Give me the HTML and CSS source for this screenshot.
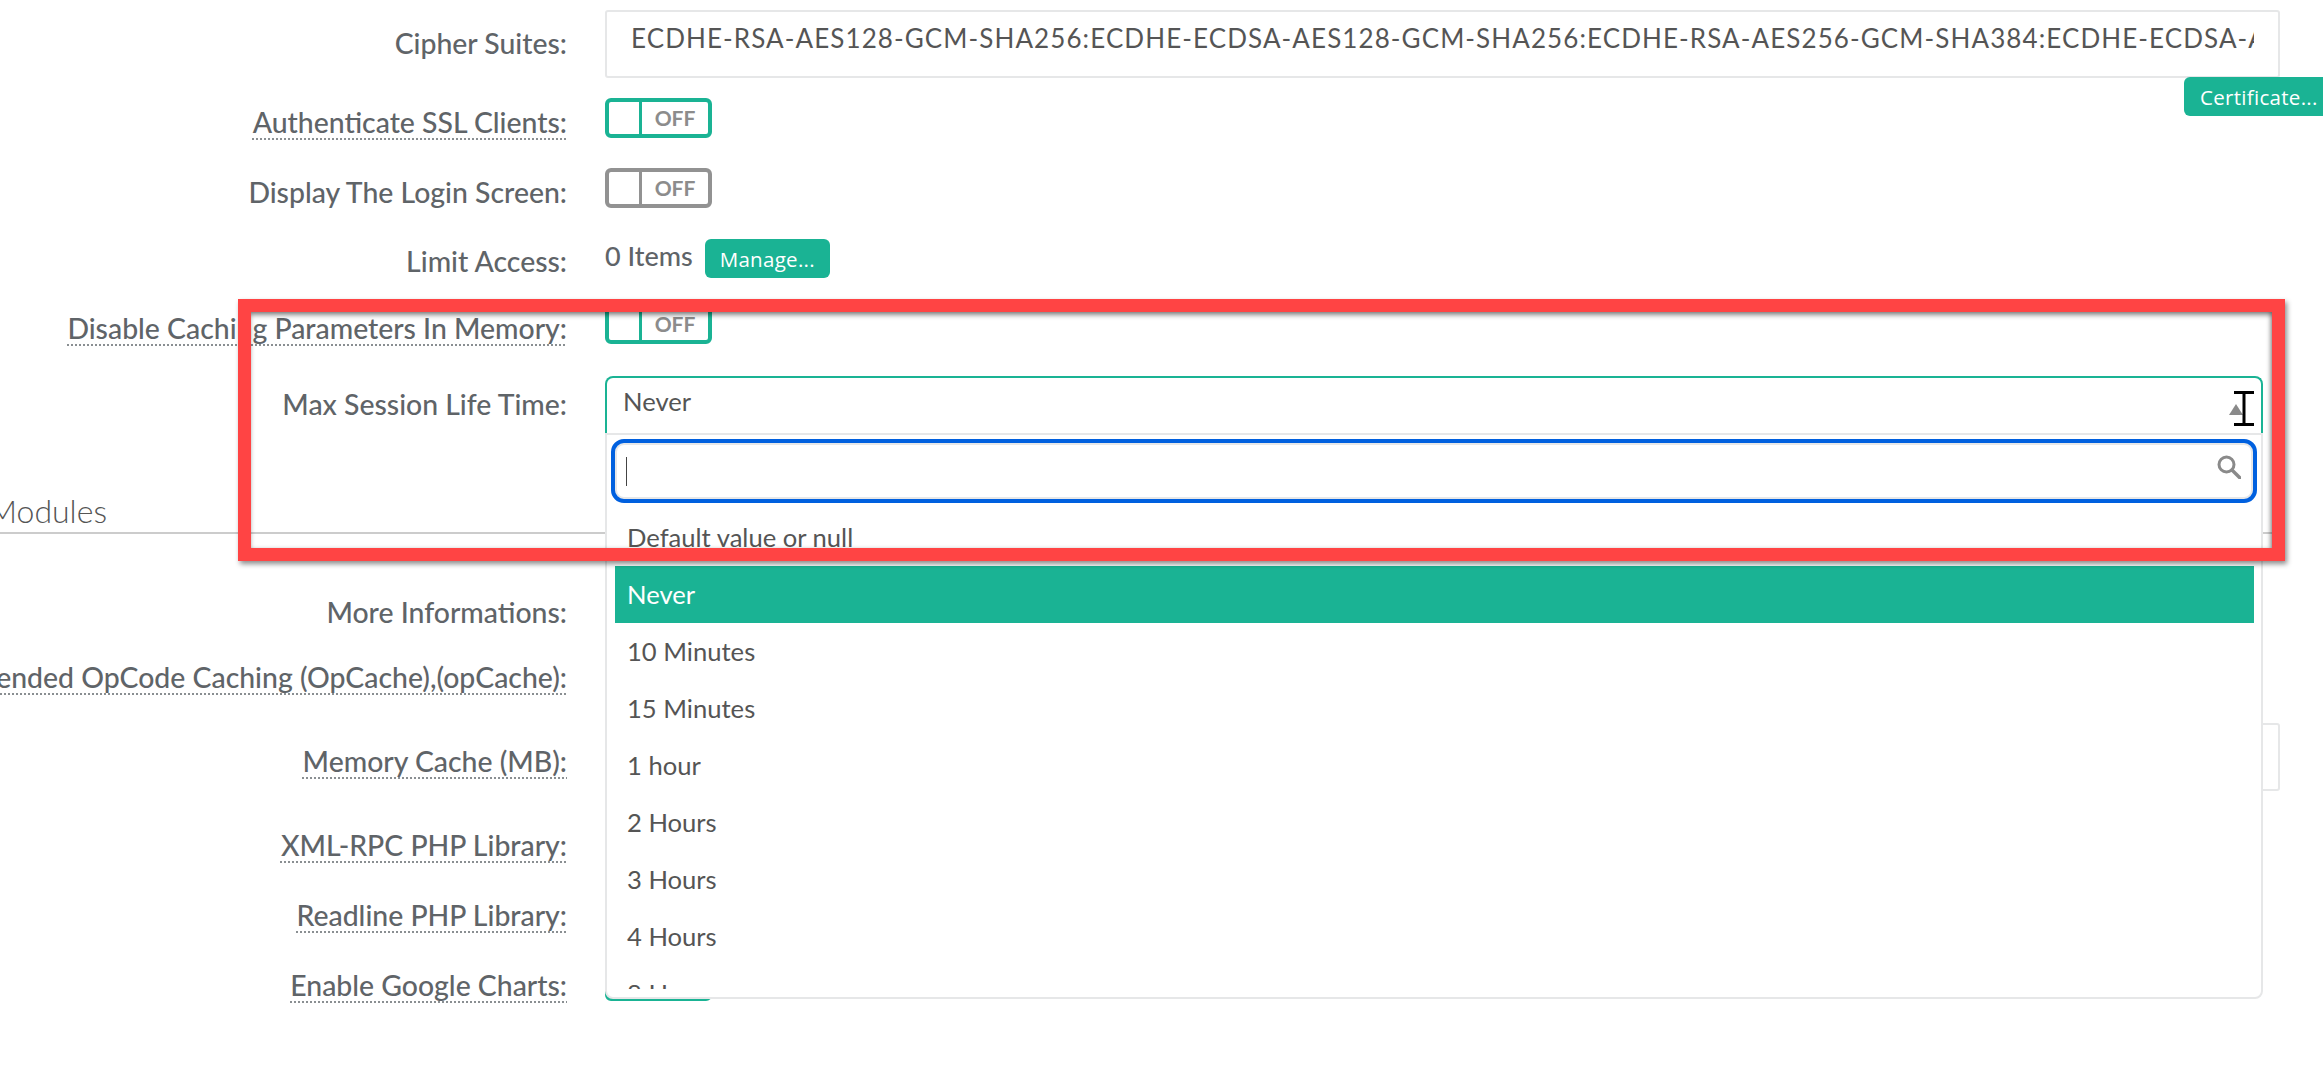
FILE: index.html
```html
<!DOCTYPE html>
<html lang="en">
<head>
  <meta charset="UTF-8" />
  <title>PHP settings</title>
  <link rel="stylesheet" href="styles.css">
</head>
<body>
  <form class="settings">
    <label class="field-label label-input">Cipher Suites:</label>
    <div class="cipher-field">
      <input class="text-input" type="text" value="ECDHE-RSA-AES128-GCM-SHA256:ECDHE-ECDSA-AES128-GCM-SHA256:ECDHE-RSA-AES256-GCM-SHA384:ECDHE-ECDSA-AES256-GCM-SHA384:ECDHE-RSA-CHACHA20-POLY1305">
      <button class="btn btn-certificate" type="button">Certificate...</button>
    </div>

    <label class="field-label"><span class="hint">Authenticate SSL Clients:</span></label>
    <div class="toggle"><span class="toggle-knob"></span><span class="toggle-text">OFF</span></div>

    <label class="field-label">Display The Login Screen:</label>
    <div class="toggle toggle-muted"><span class="toggle-knob"></span><span class="toggle-text">OFF</span></div>

    <label class="field-label label-limit">Limit Access:</label>
    <div class="items-field">
      <span class="items-count">0 Items</span>
      <button class="btn btn-manage" type="button">Manage...</button>
    </div>

    <label class="field-label"><span class="hint">Disable Caching Parameters In Memory:</span></label>
    <div class="toggle"><span class="toggle-knob"></span><span class="toggle-text">OFF</span></div>

    <label class="field-label label-select">Max Session Life Time:</label>
    <div class="select">
      <span class="select-value">Never</span>
      <span class="select-arrow"></span>
      <div class="dropdown">
        <div class="dropdown-search">
          <span class="search-caret"></span>
          <svg class="search-icon" viewBox="0 0 24 24" width="24" height="24">
            <circle cx="9.5" cy="9.5" r="7.5" fill="none" stroke="#8a8a8a" stroke-width="3"/>
            <path d="M15 15l8 8" stroke="#8a8a8a" stroke-width="3.4" stroke-linecap="round"/>
          </svg>
        </div>
        <ul class="options">
          <li>Default value or null</li>
          <li class="option-active">Never</li>
          <li>10 Minutes</li>
          <li>15 Minutes</li>
          <li>1 hour</li>
          <li>2 Hours</li>
          <li>3 Hours</li>
          <li>4 Hours</li>
          <li>8 Hours</li>
        </ul>
      </div>
    </div>

    <h2 class="section-title">Modules</h2>

    <label class="field-label label-info">More Informations:</label>
    <div></div>

    <label class="field-label label-opcache"><span class="hint">Extended OpCode Caching (OpCache),(opCache):</span></label>
    <div class="toggle"><span class="toggle-knob"></span><span class="toggle-text">OFF</span></div>

    <label class="field-label label-memory"><span class="hint">Memory Cache (MB):</span></label>
    <input class="text-input" type="text">

    <label class="field-label"><span class="hint">XML-RPC PHP Library:</span></label>
    <div class="toggle"><span class="toggle-knob"></span><span class="toggle-text">OFF</span></div>

    <label class="field-label"><span class="hint">Readline PHP Library:</span></label>
    <div class="toggle"><span class="toggle-knob"></span><span class="toggle-text">OFF</span></div>

    <label class="field-label"><span class="hint">Enable Google Charts:</span></label>
    <div class="toggle"><span class="toggle-knob"></span><span class="toggle-text">OFF</span></div>
  </form>

  <div class="callout"></div>

  <svg class="text-cursor" viewBox="0 0 20 35" width="20" height="35">
    <path d="M0 1.5h20M0 33.5h20M10 1.5v32" stroke="#000" stroke-width="3" fill="none"/>
  </svg>
</body>
</html>
```

FILE: styles.css
```css
:root {
  --teal: #1ab394;
  --line: #e6e7e8;
  --label: #5f6468;
  --text: #555;
}

html, body {
  margin: 0;
  padding: 0;
  height: 100%;
  background: #fff;
  overflow: hidden;
  font-family: "Lato", "Open Sans", sans-serif;
}

body {
  position: relative;
}

.settings {
  display: grid;
  width: 2280px;
  padding-top: 10px;
  grid-template-columns: 567px 1fr;
  grid-template-rows: 88px 70px 71px 65px 72px 114px 96px 68px 69px 98px 70px 70px 110px;
  column-gap: 38px;
  align-items: start;
}

.field-label {
  justify-self: end;
  margin-top: 7px;
  font-size: 28.4px;
  font-weight: 500;
  line-height: 34px;
  color: var(--label);
  white-space: nowrap;
}

.label-input { margin-top: 16px; }
.label-select { margin-top: 11px; }
.label-memory { margin-top: 21px; }
.label-limit { margin-top: 5px; }
.label-info { margin-top: 9px; }
.label-opcache { margin-top: 6px; }

.hint {
  text-decoration: underline dotted 2px #8a8f92;
  text-decoration-skip-ink: none;
  text-underline-offset: 5px;
}

.text-input {
  display: block;
  box-sizing: border-box;
  width: 100%;
  height: 68px;
  padding: 0 24px 12px 24px;
  border: 2px solid var(--line);
  border-radius: 3px;
  background: #fff;
  font: 26px "Lato", sans-serif;
  letter-spacing: 1.09px;
  color: var(--text);
  outline: none;
}

.cipher-field {
  display: flex;
  flex-direction: column;
}

.btn {
  border: 0;
  border-radius: 6px;
  background: var(--teal);
  color: #fff;
  font-family: "Open Sans", sans-serif;
  font-size: 20.5px;
  letter-spacing: 0.3px;
  cursor: pointer;
}

.btn-certificate {
  align-self: flex-end;
  width: 150px;
  height: 39px;
  margin: -1px -54px 0 0;
  padding: 0 0 0 16px;
  text-align: left;
  white-space: nowrap;
}

.btn-manage {
  width: 125px;
  height: 39px;
  padding: 0;
}

.toggle {
  display: flex;
  box-sizing: border-box;
  width: 107px;
  height: 40px;
  border: 4px solid var(--teal);
  border-radius: 6px;
}

.toggle-muted {
  border-color: #929292;
}

.toggle-knob {
  width: 30px;
  border-right: 3px solid var(--teal);
}

.toggle-muted .toggle-knob {
  border-right-color: #929292;
}

.toggle-text {
  flex: 1;
  text-align: center;
  font-size: 21px;
  font-weight: 700;
  line-height: 31px;
  color: #8c8c8c;
}

.items-field {
  display: flex;
  align-items: center;
  gap: 12px;
}

.items-count {
  margin-bottom: 5px;
  font-size: 27px;
  font-weight: 500;
  line-height: 34px;
  color: var(--label);
}

.select {
  position: relative;
  z-index: 2;
  box-sizing: border-box;
  width: 1658px;
  height: 57px;
  padding: 8px 0 0 16px;
  border: 2px solid var(--teal);
  border-bottom: 0;
  border-radius: 8px 8px 0 0;
  background: #fff;
  font-size: 25.6px;
  line-height: 30px;
  color: var(--text);
}

.select-arrow {
  position: absolute;
  right: 18px;
  top: 26px;
  border-left: 7px solid transparent;
  border-right: 7px solid transparent;
  border-bottom: 11px solid #8a8a8a;
}

.dropdown {
  position: absolute;
  top: 55px;
  left: -2px;
  right: -2px;
  box-sizing: border-box;
  height: 566px;
  border: 2px solid var(--line);
  border-radius: 0 0 8px 8px;
  background: #fff;
}

.dropdown-search {
  position: relative;
  box-sizing: border-box;
  height: 64px;
  margin: 4px 4px 0;
  border: 4px solid #0060df;
  border-radius: 13px;
  box-shadow: inset 0 0 0 2px var(--line);
}

.search-caret {
  position: absolute;
  left: 11px;
  top: 14px;
  width: 1px;
  height: 29px;
  background: #444;
}

.search-icon {
  position: absolute;
  right: 12px;
  top: 12px;
}

.options {
  height: 480px;
  margin: 6px 7px 0 8px;
  padding: 0;
  overflow: hidden;
  list-style: none;
}

.options li {
  height: 57px;
  padding-left: 12px;
  font-size: 25.6px;
  line-height: 57px;
  color: var(--text);
}

.options .option-active {
  background: var(--teal);
  color: #fff;
}

.section-title {
  grid-column: 1 / -1;
  box-sizing: border-box;
  height: 44px;
  margin: 0 0 0 -12px;
  border-bottom: 2px solid #ccc;
  font-size: 32px;
  font-weight: 300;
  line-height: 42px;
  color: var(--text);
}

/* annotation drawn over the screenshot */
.callout {
  position: absolute;
  z-index: 3;
  left: 238px;
  top: 299px;
  box-sizing: border-box;
  width: 2047px;
  height: 262px;
  border: 13px solid #ff4444;
  box-shadow: 2px 3px 5px rgba(0, 0, 0, 0.45), inset 0 4px 5px -1px rgba(0, 0, 0, 0.45), inset -3px 0 4px -1px rgba(0, 0, 0, 0.3);
}

.text-cursor {
  position: absolute;
  z-index: 4;
  left: 2234px;
  top: 391px;
}
```
